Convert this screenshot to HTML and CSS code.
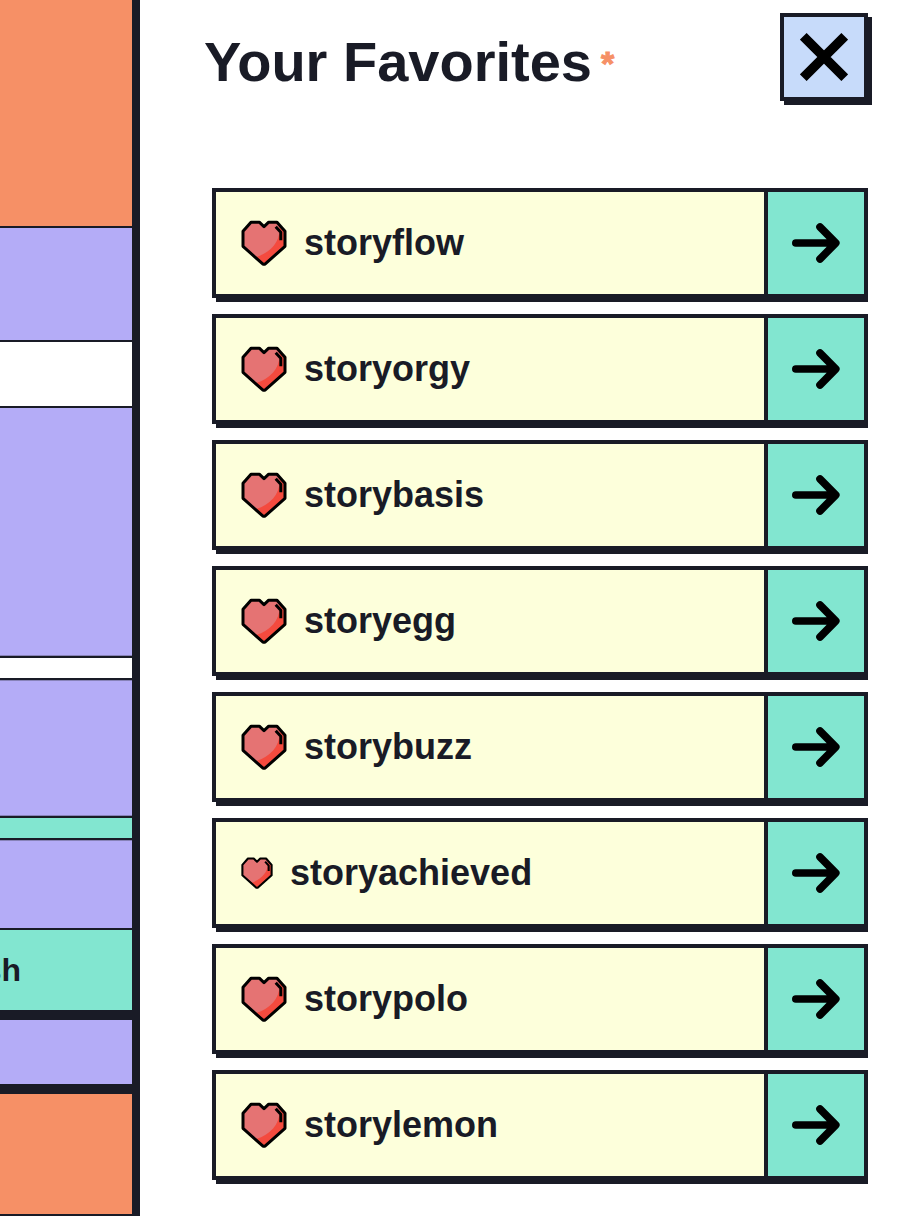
FILE: index.html
```
<!DOCTYPE html>
<html lang="en">
<head>
<meta charset="utf-8">
<title>Your Favorites</title>
<link rel="stylesheet" href="styles.css">
</head>
<body>
<svg class="defs" width="0" height="0" aria-hidden="true">
<symbol id="heart" viewBox="0 0 46 46">
<path fill="#f44a3e" d="M10 2.200H18.300L23 6.700L27.700 2.200H36L44 11.300V26.300L24 44.200H22L2 26.300V11.300Z"/>
<path fill="#e57373" d="M10 2.200H18.300L23 6.700L27.700 2.200H36L38.500 7.500C39.500 21 30 32.500 15 37L2 26.300V11.300Z"/>
<path class="ink" stroke-width="3" stroke-linejoin="round" d="M10 2.200H18.300L23 6.700L27.700 2.200H36L44 11.300V26.300L24 44.200H22L2 26.300V11.300Z"/>
<path class="ink" stroke-width="3" d="M34.700 6.700L39.800 12.300V20.300"/>
</symbol>
<symbol id="arrow" viewBox="0 0 48 48">
<path class="ink" stroke-width="7.600" stroke-linecap="round" stroke-linejoin="round" d="M3.800 24H43M28 8L43.800 24L28 40"/>
</symbol>
</svg>
<div class="app">
<aside class="rail">
<div class="cell orange h226"></div>
<div class="cell purple h112"></div>
<div class="cell h64"></div>
<div class="cell purple h248 fade-bottom"></div>
<div class="cell h20"></div>
<div class="cell purple h136 fade-top fade-bottom"></div>
<div class="cell green h20"></div>
<div class="cell purple h88 fade-top"></div>
<div class="cell green label">sh</div>
<div class="cell purple h64 thick"></div>
<div class="cell orange last"></div>
</aside>
<main class="panel">
<header class="head">
<h1 class="title">Your Favorites<span class="star">*</span></h1>
<button class="close" aria-label="Close"><svg width="48" height="48" viewBox="0 0 48 48"><path class="ink" stroke-width="9.400" d="M3.300 3.300L44.700 44.700M44.700 3.300L3.300 44.700"/></svg></button>
</header>
<ul class="list">
<li class="row"><div class="name"><svg class="heart"><use href="#heart"/></svg>storyflow</div><div class="go"><svg class="arrow"><use href="#arrow"/></svg></div></li>
<li class="row"><div class="name"><svg class="heart"><use href="#heart"/></svg>storyorgy</div><div class="go"><svg class="arrow"><use href="#arrow"/></svg></div></li>
<li class="row"><div class="name"><svg class="heart"><use href="#heart"/></svg>storybasis</div><div class="go"><svg class="arrow"><use href="#arrow"/></svg></div></li>
<li class="row"><div class="name"><svg class="heart"><use href="#heart"/></svg>storyegg</div><div class="go"><svg class="arrow"><use href="#arrow"/></svg></div></li>
<li class="row"><div class="name"><svg class="heart"><use href="#heart"/></svg>storybuzz</div><div class="go"><svg class="arrow"><use href="#arrow"/></svg></div></li>
<li class="row"><div class="name"><svg class="heart small"><use href="#heart"/></svg>storyachieved</div><div class="go"><svg class="arrow"><use href="#arrow"/></svg></div></li>
<li class="row"><div class="name"><svg class="heart"><use href="#heart"/></svg>storypolo</div><div class="go"><svg class="arrow"><use href="#arrow"/></svg></div></li>
<li class="row"><div class="name"><svg class="heart"><use href="#heart"/></svg>storylemon</div><div class="go"><svg class="arrow"><use href="#arrow"/></svg></div></li>
</ul>
</main>
</div>
</body>
</html>
```
FILE: styles.css
```
* { box-sizing: border-box; }
body { margin: 0; background: #fff; color: #191b26; font-family: "Liberation Sans", Arial, sans-serif; font-weight: 700; }
.defs { display: block; }
.ink { fill: none; stroke: #000; }
.app { display: flex; height: 1216px; overflow: hidden; }
.rail { width: 140px; flex: none; border-right: 8px solid #191b26; overflow: hidden; }
.cell { box-sizing: content-box; background: #fff; border-bottom: 2px solid #191b26; }
.orange { background: #f69066; }
.purple { background: #b4acf7; }
.green { background: #82e6d0; }
.h226 { height: 226px; }
.h112 { height: 112px; }
.h64 { height: 64px; }
.h248 { height: 248px; }
.h20 { height: 20px; }
.h136 { height: 136px; }
.h88 { height: 88px; }
.fade-top { box-shadow: inset 0 1px #8782b8; }
.fade-bottom { box-shadow: inset 0 -1px #8782b8; }
.fade-top.fade-bottom { box-shadow: inset 0 1px #8782b8, inset 0 -1px #8782b8; }
.label { display: flex; justify-content: flex-end; width: 21px; height: 80px; padding-right: 111px; border-bottom-width: 10px; font-size: 32px; line-height: 80px; }
.thick { border-bottom-width: 10px; }
.last { height: 120px; }
.panel { flex: 1; padding: 13px 42px 0 64px; }
.head { display: flex; justify-content: space-between; height: 175px; padding-right: 4px; }
.title { display: flex; margin: 0; font-size: 56px; line-height: 98px; }
.star { margin-left: 9px; color: #f69066; -webkit-text-stroke: 1px #f69066; font-size: 34px; line-height: 100px; }
.close { width: 88px; height: 88px; padding: 16px; border: 4px solid #191b26; background: #c7dbfa; box-shadow: 4px 4px #191b26; }
.close svg { display: block; }
.list { display: grid; gap: 16px; width: 664px; margin: 0; padding: 0 0 4px 8px; list-style: none; overflow: hidden; }
.row { display: flex; width: 656px; height: 110px; border: 4px solid #191b26; background: #fdffdb; box-shadow: 0 4px #191b26; }
.row { clip-path: polygon(-4px -4px, 656px -4px, 656px 114px, 4px 114px, 4px 110px, -4px 110px); }
.name { flex: 1; display: flex; align-items: center; gap: 17px; padding-left: 25px; font-size: 36px; }
.heart { width: 46px; height: 46px; }
.small { width: 32px; height: 32px; }
.go { display: grid; place-items: center; width: 100px; border-left: 4px solid #191b26; background: #82e6d0; }
.arrow { width: 48px; height: 48px; }
```
